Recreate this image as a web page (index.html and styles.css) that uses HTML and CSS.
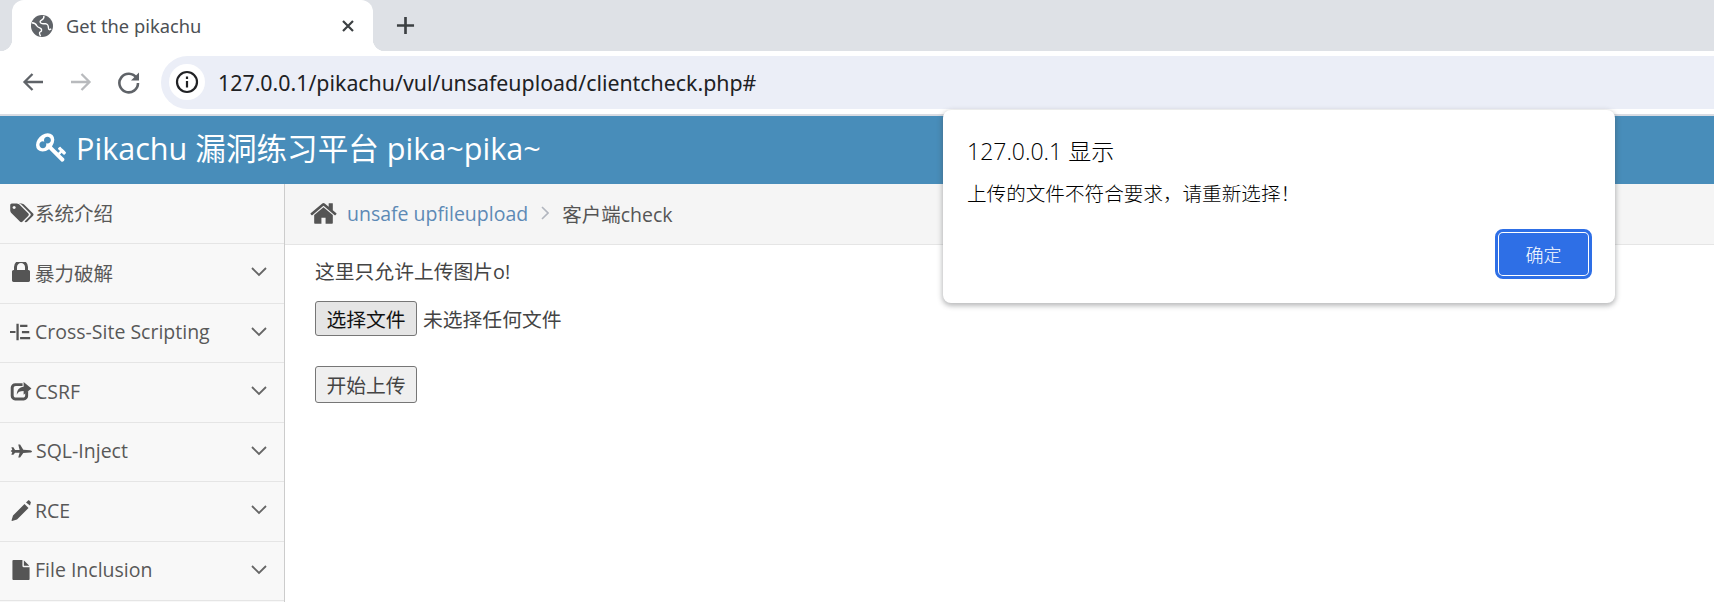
FILE: index.html
```html
<!DOCTYPE html>
<html lang="en">
<head>
    <meta charset="UTF-8">
    <title>Get the pikachu</title>
    <link rel="stylesheet" href="styles.css">
</head>
<body>

    <div class="tabstrip">
        <div class="tab">
            <svg class="favicon" viewBox="0 0 24 24"><circle cx="12" cy="12" r="12"/><path class="favicon-land" d="M1 8.500c3 .2 4.500 1.500 5.500 3.500s3.500 1.500 4.500 3 .5 3-1 3.500-.5 3 .5 4.500M14 1c.5 2-.5 3.500-2.500 4.500S9.500 8 11 9s3.500.5 5 .5 3 2 3 4.500 1.500 2.500 3 1"/></svg>
            <span class="tab-title">Get the pikachu</span>
            <svg class="tab-close" viewBox="0 0 14 14"><path d="M2 2l10 10M12 2L2 12"/></svg>
        </div>
        <svg class="new-tab" viewBox="0 0 20 20"><path d="M10 1v18M1 10h18"/></svg>
    </div>

    <div class="toolbar">
        <svg class="nav-icon" viewBox="0 0 24 24"><path d="M22 12H4M11.500 4 3.500 12l8 8"/></svg>
        <svg class="nav-icon nav-off" viewBox="0 0 24 24"><path d="M2 12h18M12.500 4l8 8-8 8"/></svg>
        <svg class="nav-icon nav-reload" viewBox="0 0 24 24"><path d="M19.500 8A9.300 9.300 0 1 0 21 13"/><path class="nav-fill" d="M22 2.500v8h-8z"/></svg>
        <div class="omnibox">
            <span class="site-info">
                <svg viewBox="0 0 24 24"><circle cx="12" cy="12" r="10"/><path d="M12 11v6.500M12 6.500v2.500"/></svg>
            </span>
            <span class="url">127.0.0.1/pikachu/vul/unsafeupload/clientcheck.php#</span>
        </div>
    </div>

    <div class="navbar">
        <svg class="brand-icon" viewBox="0 0 1792 1792"><path d="M832 512q0-80-56-136t-136-56-136 56-56 136q0 42 19 83-41-19-83-19-80 0-136 56t-56 136 56 136 136 56 136-56 56-136q0-42-19-83 41 19 83 19 80 0 136-56t56-136zm851 704q0 17-49 66t-66 49q-9 0-28.500-16t-36.500-33-38.500-40-24.500-26l-96 96 220 220q28 28 28 68 0 42-39 81t-81 39q-40 0-68-28l-671-671q-176 131-365 131-163 0-265.500-102.500t-102.500-265.500q0-160 95-313t248-248 313-95q163 0 265.500 102.500t102.500 265.500q0 189-131 365l355 355 96-96q-3-3-26-24.500t-40-38.500-33-36.500-16-28.500q0-17 49-66t66-49q13 0 23 10 6 6 46 44.500t82 79.500 86.500 86 73 78 28.500 41z"/></svg>
        <span>Pikachu 漏洞练习平台 pika~pika~</span>
    </div>

    <div class="layout">
        <ul class="sidebar">
            <li class="menu-item">
                <svg class="menu-icon icon-tags" viewBox="0 0 1920 1792"><path d="M448 448q0-53-37.500-90.500t-90.500-37.500-90.500 37.500-37.500 90.500 37.500 90.500 90.500 37.500 90.500-37.500 37.500-90.500zm1067 576q0 53-37 90l-491 492q-39 37-91 37-53 0-90-37l-715-716q-38-37-64.500-101t-26.500-117v-416q0-52 38-90t90-38h416q53 0 117 26.500t102 64.500l715 714q37 39 37 91zm384 0q0 53-37 90l-491 492q-39 37-91 37-36 0-59-14t-53-45l470-470q37-37 37-90 0-52-37-91l-715-714q-38-38-102-64.500t-117-26.500h224q53 0 117 26.500t102 64.500l715 714q37 39 37 91z"/></svg>
                <span class="menu-text text-tight">系统介绍</span>
            </li>
            <li class="menu-item">
                <svg class="menu-icon icon-small" viewBox="320 256 1152 1280"><path d="M640 768h512v-192q0-106-75-181t-181-75-181 75-75 181v192zm832 96v576q0 40-28 68t-68 28h-960q-40 0-68-28t-28-68v-576q0-40 28-68t68-28h32v-192q0-184 132-316t316-132 316 132 132 316v192h32q40 0 68 28t28 68z"/></svg>
                <span class="menu-text">暴力破解</span>
                <svg class="chevron" viewBox="0 0 16 10"><path d="M1 1l7 7 7-7"/></svg>
            </li>
            <li class="menu-item">
                <svg class="menu-icon" viewBox="0 0 24 20"><path d="M0 9h6v2H0zM7 1h2.500v18H7zM11 2h8v2.500h-8zM13 8.800h8v2.500h-8zM11 15.500h11v2.500H11z"/></svg>
                <span class="menu-text">Cross-Site Scripting</span>
                <svg class="chevron" viewBox="0 0 16 10"><path d="M1 1l7 7 7-7"/></svg>
            </li>
            <li class="menu-item">
                <svg class="menu-icon" viewBox="1 0 21 19"><path d="M6 2h7v2.800H6.500C5.300 4.800 4.500 5.600 4.500 6.800v7c0 1.200.8 2 2 2h7c1.200 0 2-.8 2-2v-2.300l2.800-2.300v5.100c0 2.300-1.900 4.200-4.200 4.200H5.900c-2.300 0-4.200-1.900-4.200-4.200V6.200C1.700 3.900 3.700 2 6 2z"/><path d="M14 1l7.500 6-7.500 6V9.500c-3.500 0-5.500 1-6.500 3.500 0-4.500 2.500-7 6.500-7.500z"/></svg>
                <span class="menu-text">CSRF</span>
                <svg class="chevron" viewBox="0 0 16 10"><path d="M1 1l7 7 7-7"/></svg>
            </li>
            <li class="menu-item">
                <svg class="menu-icon" viewBox="0 0 24 16"><path d="M9 1h2l3.500 5.700 7.500.6c1 .1 2 .7 2 1.200s-1 1.100-2 1.200l-7.500.6L11 15H9l1.500-5.200-5 .2-1.800 2.200H1.500l1-3.200-1.500-.5v-1l1.500-.5-1-3.200h2.200L5.500 6.800l5 .2z"/></svg>
                <span class="menu-text text-wide">SQL-Inject</span>
                <svg class="chevron" viewBox="0 0 16 10"><path d="M1 1l7 7 7-7"/></svg>
            </li>
            <li class="menu-item">
                <svg class="menu-icon" viewBox="0 0 22 22"><path d="M14.500 5l4 4L7 20.500 2 22l-.5-.5L3 16.500zM16 3.500l1.800-1.800c.5-.5 1.200-.5 1.700 0l1 1c.5.5.5 1.200 0 1.700L20 6.500z"/></svg>
                <span class="menu-text">RCE</span>
                <svg class="chevron" viewBox="0 0 16 10"><path d="M1 1l7 7 7-7"/></svg>
            </li>
            <li class="menu-item">
                <svg class="menu-icon icon-small" viewBox="0 0 1536 1792"><path d="M1024 512v-472q22 14 36 28l408 408q14 14 28 36h-472zm-128 32q0 40 28 68t68 28h544v1056q0 40-28 68t-68 28h-1344q-40 0-68-28t-28-68v-1600q0-40 28-68t68-28h800v544z"/></svg>
                <span class="menu-text">File Inclusion</span>
                <svg class="chevron" viewBox="0 0 16 10"><path d="M1 1l7 7 7-7"/></svg>
            </li>
        </ul>

        <div class="main">
            <div class="breadcrumbs">
                <svg class="home-icon" viewBox="0 0 1792 1792"><path d="M1472 992v480q0 26-19 45t-45 19h-384v-384h-256v384h-384q-26 0-45-19t-19-45v-480q0-1 .5-3t.5-3l575-474 575 474q1 2 1 6zm223-69l-62 74q-8 9-21 11h-3q-13 0-21-7l-692-577-692 577q-12 8-24 7-13-2-21-11l-62-74q-8-10-7-23.500t11-20.500l719-599q32-26 76-26t76 26l244 204v-195q0-14 9-23t23-9h192q14 0 23 9t9 23v408l219 182q10 8 11 21.500t-7 23.500z"/></svg>
                <a class="crumb-link" href="#">unsafe upfileupload</a>
                <svg class="crumb-sep" viewBox="0 0 8 14"><path d="M1 1l6 6-6 6"/></svg>
                <span>客户端check</span>
            </div>
            <div class="content">
                <p class="hint">这里只允许上传图片o!</p>
                <div class="file-row">
                    <button class="btn btn-file" type="button">选择文件</button>
                    <span>未选择任何文件</span>
                </div>
                <button class="btn btn-submit" type="button">开始上传</button>
            </div>
        </div>
    </div>

    <div class="alert">
        <div class="alert-title">127.0.0.1 显示</div>
        <div class="alert-msg">上传的文件不符合要求，请重新选择！</div>
        <div class="alert-actions">
            <button class="alert-ok" type="button">确定</button>
        </div>
    </div>

</body>
</html>
```

FILE: styles.css
```css
* {
    box-sizing: border-box;
}
html, body {
    margin: 0;
    padding: 0;
    height: 100%;
    overflow: hidden;
}
body {
    display: flex;
    flex-direction: column;
    font-family: "Open Sans", "Noto Sans CJK SC", sans-serif;
    font-size: 19.5px;
    color: #393939;
    background-color: #fff;
}

/* browser chrome */
.tabstrip {
    display: flex;
    align-items: flex-end;
    height: 51px;
    padding-left: 12px;
    background-color: #dee1e6;
}
.tab {
    position: relative;
    display: flex;
    align-items: center;
    width: 361px;
    height: 51px;
    padding: 0 15px 0 19px;
    background-color: #fff;
    border-radius: 12px 12px 0 0;
}
.tab::before, .tab::after {
    content: "";
    position: absolute;
    bottom: 0;
    width: 12px;
    height: 12px;
}
.tab::before {
    left: -12px;
    background: radial-gradient(circle at 0 0, #dee1e6 12px, #fff 12.500px);
}
.tab::after {
    right: -12px;
    background: radial-gradient(circle at 100% 0, #dee1e6 12px, #fff 12.500px);
}
.favicon {
    width: 22px;
    height: 22px;
    flex: none;
    fill: #5f6368;
}
.favicon-land {
    fill: none;
    stroke: #fff;
    stroke-width: 1.500;
}
.tab-title {
    flex: 1;
    margin-left: 13px;
    font-family: "Noto Sans", "Open Sans", sans-serif;
    font-size: 18.300px;
    color: #4c5054;
}
.tab-close {
    width: 14px;
    height: 14px;
    margin-right: 3px;
    fill: none;
    stroke: #3c4043;
    stroke-width: 2.200;
}
.new-tab {
    width: 19px;
    height: 19px;
    margin: 0 0 16px 23px;
    fill: none;
    stroke: #3c4043;
    stroke-width: 2.800;
}
.toolbar {
    display: flex;
    align-items: center;
    height: 65px;
    padding: 0 0 1px 21px;
    background-color: #fff;
    border-bottom: 2px solid #d9dce3;
}
.nav-icon {
    width: 24px;
    height: 24px;
    margin-right: 24px;
    flex: none;
    fill: none;
    stroke: #5f6368;
    stroke-width: 2.300;
}
.nav-off {
    stroke: #b8babd;
}
.nav-reload {
    stroke-width: 2.600;
}
.nav-fill {
    fill: #5f6368;
    stroke: none;
}
.omnibox {
    display: flex;
    align-items: center;
    flex: 1;
    height: 53px;
    margin-left: -4px;
    padding-left: 8px;
    background-color: #ebeef7;
    border-radius: 27px 0 0 27px;
}
.site-info {
    display: flex;
    align-items: center;
    justify-content: center;
    width: 36px;
    height: 36px;
    background-color: #fff;
    border-radius: 50%;
}
.site-info svg {
    width: 24px;
    height: 24px;
    fill: none;
    stroke: #202124;
    stroke-width: 2.200;
}
.url {
    margin-left: 13px;
    font-family: "Noto Sans", "Open Sans", sans-serif;
    font-size: 21.350px;
    color: #202124;
}

/* page header */
.navbar {
    display: flex;
    align-items: center;
    flex: none;
    height: 68px;
    padding: 0 0 6px 36px;
    font-size: 30.600px;
    color: #fff;
    background-color: #488dba;
}
.brand-icon {
    width: 32px;
    height: 32px;
    margin-right: 8px;
    fill: #fff;
}

.layout {
    display: flex;
    flex: 1;
    min-height: 0;
}

/* sidebar */
.sidebar {
    flex: none;
    width: 285px;
    margin: 0;
    padding: 0.500px 0 0;
    list-style: none;
    background-color: #f8f8f8;
    border-right: 1px solid #ccc;
}
.menu-item {
    display: flex;
    align-items: center;
    height: 59.500px;
    padding: 0 17px 2px 10px;
    color: #585858;
    border-bottom: 1px solid #e5e5e5;
}
.menu-icon {
    width: 22px;
    height: 22px;
    flex: none;
    fill: #555;
}
.icon-tags {
    width: 24px;
}
.icon-small {
    height: 20px;
}
.menu-text {
    flex: 1;
    margin-left: 3px;
}
.text-tight {
    margin-left: 1px;
}
.text-wide {
    margin-left: 4px;
}
.chevron {
    width: 16px;
    height: 10px;
    fill: none;
    stroke: #666;
    stroke-width: 1.800;
}

/* main column */
.main {
    flex: 1;
}
.breadcrumbs {
    display: flex;
    align-items: center;
    height: 61px;
    padding: 0 0 2px 24px;
    color: #555;
    background-color: #f5f5f5;
    border-bottom: 1px solid #e5e5e5;
}
.home-icon {
    width: 29px;
    height: 29px;
    margin-right: 9px;
    fill: #555;
}
.crumb-link {
    color: #5d8ab5;
    text-decoration: none;
}
.crumb-sep {
    width: 8px;
    height: 14px;
    margin: 0 13px;
    fill: none;
    stroke: #b2b6bf;
    stroke-width: 1.600;
}
.content {
    padding: 12px 30px;
    font-size: 19.800px;
    color: #444;
}
.hint {
    margin: 0 0 14px;
    line-height: 30px;
}
.file-row {
    display: flex;
    align-items: center;
    gap: 6px;
    margin-bottom: 30px;
}
.btn {
    display: block;
    width: 102px;
    padding: 0;
    font: inherit;
    color: #444;
    background-color: #efefef;
    border: 1px solid #767676;
    border-radius: 3px;
}
.btn-file {
    height: 35px;
    color: #111;
    background-color: #e5e5e5;
}
.btn-submit {
    height: 37px;
}

/* alert dialog */
.alert {
    position: absolute;
    top: 110px;
    left: 943px;
    width: 672px;
    height: 193px;
    padding: 26px 25px 0 24px;
    color: #000;
    font-weight: 300;
    background-color: #fff;
    border-radius: 8px;
    box-shadow: 0 2px 5px 1px rgba(60, 64, 67, 0.35);
}
.alert-title {
    font-size: 23px;
    line-height: 30px;
}
.alert-msg {
    margin-top: 13.500px;
    font-size: 19.600px;
    line-height: 28px;
}
.alert-actions {
    display: flex;
    justify-content: flex-end;
    margin-top: 23.500px;
}
.alert-ok {
    width: 93px;
    height: 46px;
    padding: 0;
    font: inherit;
    font-size: 18px;
    color: #fff;
    background-color: #2e6fe6;
    border: 2px solid #fff;
    border-radius: 6px;
    outline: 3px solid #2e6fe6;
    outline-offset: -1px;
}
```
